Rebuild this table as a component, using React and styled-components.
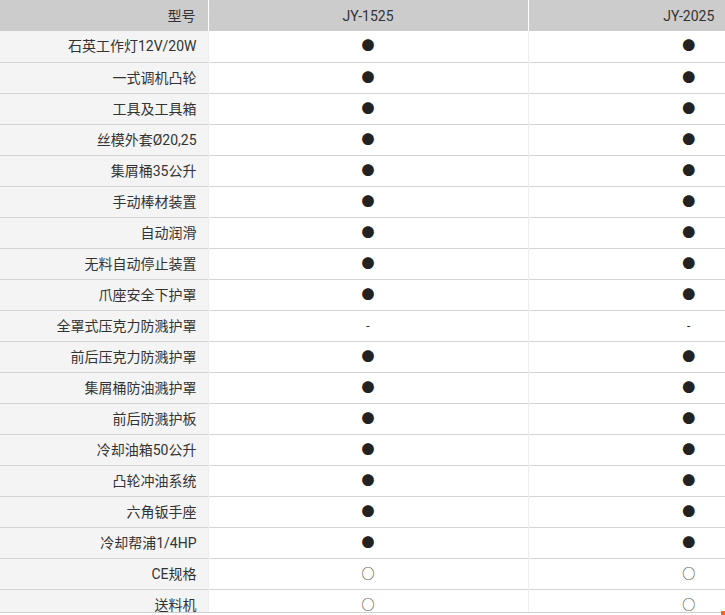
import React from "react";
import styled, { createGlobalStyle } from "styled-components";

const Global = createGlobalStyle`
  html, body { margin: 0; padding: 0; background: #fff; }
  body { font-family: Roboto, "Noto Sans CJK SC", sans-serif; color: #333; }
`;

const Page = styled.div`
  width: 725px;
  height: 615px;
  overflow: hidden;
  position: relative;
`;

const Scroller = styled.div`
  height: 612px;
  overflow: hidden;
  border-bottom: 1px solid #cfcfcf;
`;

const Table = styled.table`
  width: 849px;
  border-collapse: collapse;
  table-layout: fixed;
  font-size: 14px;
  line-height: 20px;
`;

const HeadCell = styled.th`
  background: #cccccc;
  height: 31px;
  padding: 0 12px;
  font-weight: normal;
  color: #333;
  text-align: ${(p) => (p.$label ? "right" : "center")};
  border-left: ${(p) => (p.$label ? "none" : "1px solid #fff")};
`;

const Row = styled.tr`
  height: 31px;
  border-bottom: 1px solid #d4d4d4;
`;

const LabelCell = styled.td`
  background: #f4f4f4;
  height: 30px;
  padding: 0 11px 0 12px;
  text-align: right;
  color: #333;
`;

const ValueCell = styled.td`
  height: 30px;
  padding: 0;
  text-align: center;
  border-left: 1px solid #eeeeee;
  color: #222;
  font-size: ${(p) => (p.$kind === "dash" ? "12px" : "13px")};
`;

const Corner = styled.div`
  position: absolute;
  right: 0;
  top: 611px;
  width: 4px;
  height: 4px;
  background: #f26522;
`;

const rows = [
  ["石英工作灯12V/20W", "●"],
  ["一式调机凸轮", "●"],
  ["工具及工具箱", "●"],
  ["丝模外套Ø20,25", "●"],
  ["集屑桶35公升", "●"],
  ["手动棒材装置", "●"],
  ["自动润滑", "●"],
  ["无料自动停止装置", "●"],
  ["爪座安全下护罩", "●"],
  ["全罩式压克力防溅护罩", "-"],
  ["前后压克力防溅护罩", "●"],
  ["集屑桶防油溅护罩", "●"],
  ["前后防溅护板", "●"],
  ["冷却油箱50公升", "●"],
  ["凸轮冲油系统", "●"],
  ["六角钣手座", "●"],
  ["冷却帮浦1/4HP", "●"],
  ["CE规格", "○"],
  ["送料机", "○"],
];

const kindOf = (v) => (v === "-" ? "dash" : v === "○" ? "ring" : "dot");

export default function App() {
  return (
    <Page>
      <Global />
      <Scroller>
        <Table>
          <colgroup>
            <col style={{ width: 208 }} />
            <col style={{ width: 320 }} />
            <col style={{ width: 321 }} />
          </colgroup>
          <thead>
            <tr>
              <HeadCell $label>型号</HeadCell>
              <HeadCell>JY-1525</HeadCell>
              <HeadCell>JY-2025</HeadCell>
            </tr>
          </thead>
          <tbody>
            {rows.map(([label, v]) => (
              <Row key={label}>
                <LabelCell>{label}</LabelCell>
                <ValueCell $kind={kindOf(v)}>{v}</ValueCell>
                <ValueCell $kind={kindOf(v)}>{v}</ValueCell>
              </Row>
            ))}
          </tbody>
        </Table>
      </Scroller>
      <Corner />
    </Page>
  );
}
